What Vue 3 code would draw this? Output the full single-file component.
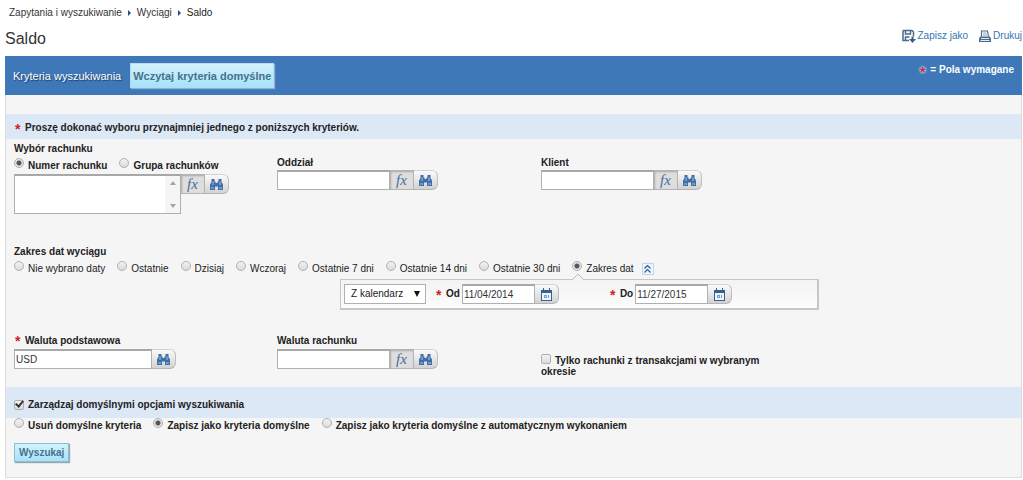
<script setup>
import { ref, h } from 'vue'

const accountMode = ref('number')
const range = ref('custom')
const calendar = ref('cal')
const from = ref('11/04/2014')
const to = ref('11/27/2015')
const currency = ref('USD')
const manage = ref(true)
const saveMode = ref('save')
const ranges = [
  { id: 'none', label: 'Nie wybrano daty' },
  { id: 'last', label: 'Ostatnie' },
  { id: 'today', label: 'Dzisiaj' },
  { id: 'yesterday', label: 'Wczoraj' },
  { id: 'd7', label: 'Ostatnie 7 dni' },
  { id: 'd14', label: 'Ostatnie 14 dni' },
  { id: 'd30', label: 'Ostatnie 30 dni' },
  { id: 'custom', label: 'Zakres dat' },
]
const saveModes = [
  { id: 'delete', label: 'Usuń domyślne kryteria' },
  { id: 'save', label: 'Zapisz jako kryteria domyślne' },
  { id: 'auto', label: 'Zapisz jako kryteria domyślne z automatycznym wykonaniem' },
]

const Binoculars = () =>
  h('svg', { width: 13, height: 11, viewBox: '0 0 13 11', 'aria-hidden': 'true' }, [
    h('path', {
      fill: '#3f6ea8',
      d: 'M1.500 0h3v2.500h1V4h2V2.500h1V0h3v3L13 5.500V11H8V7.500H5V11H0V5.500L1.500 3z',
    }),
    h('path', { fill: '#a9c4e2', d: 'M2.500 2.500h1V6h-1zM9.500 2.500h1V6h-1zM1 8.500h3v1H1zM9 8.500h3v1H9z' }),
  ])

const Calendar = () =>
  h('svg', { width: 11, height: 13, viewBox: '0 0 11 13', 'aria-hidden': 'true' }, [
    h('path', { fill: '#35628f', d: 'M2 0h1v2h5V0h1v2h2v11H0V2h2z' }),
    h('path', { fill: '#eef4fa', d: 'M1 5h9v7H1z' }),
    h('path', { fill: '#6d9ddb', d: 'M3 7h3v3H3zM7 7h1v3H7z' }),
    h('path', { fill: '#d4e5f8', d: 'M4 8h1v1H4z' }),
  ])

const Star = () => h('span', { class: 'star' }, '*')
</script>

<template>
  <div class="page">
    <nav class="crumbs" aria-label="Ścieżka">
      <a href="#">Zapytania i wyszukiwanie</a><i class="arrow"></i>
      <a href="#">Wyciągi</a><i class="arrow"></i>
      <span>Saldo</span>
    </nav>

    <header class="top">
      <h1>Saldo</h1>
      <div class="actions">
        <a href="#">
          <svg width="14" height="14" viewBox="0 0 14 14" aria-hidden="true">
            <path d="M1 1.500h9l1.500 1.500V7.500M7 11.500H1V1.500M3.500 1.500V5h5V1.500M3.500 11V8h4" fill="none" stroke="#4a6a8c" stroke-width="1.500" />
            <path d="M9.500 7.500h2V10H14l-3.500 4L7 10h2.500z" fill="#3d5f82" />
          </svg>
          Zapisz jako
        </a>
        <a href="#">
          <svg width="12" height="12" viewBox="0 0 12 12" aria-hidden="true">
            <path d="M2.500 6.500V1h6L9.500 6.500" fill="#fff" stroke="#4a6a8c" stroke-width="1.200" />
            <path d="M4 3h3.500M4 5h4" stroke="#8aa2ba" />
            <path d="M1 6.500h10l1 2V12H0V8.500z" fill="#4a6a8c" />
            <path d="M2 8.500h8M1.500 10.500h9" stroke="#dfe9f3" />
          </svg>
          Drukuj
        </a>
      </div>
    </header>

    <form class="card" @submit.prevent>
      <div class="bar">
        <h2>Kryteria wyszukiwania</h2>
        <button type="button" class="btn large">Wczytaj kryteria domyślne</button>
        <span class="required"><b class="glow">*</b>= Pola wymagane</span>
      </div>

      <p class="band"><Star />Proszę dokonać wyboru przynajmniej jednego z poniższych kryteriów.</p>

      <div class="columns accounts">
        <div>
          <label class="caption" for="account">Wybór rachunku</label>
          <div class="options strong modes">
            <label><input v-model="accountMode" type="radio" name="account-mode" value="number"><span>Numer rachunku</span></label>
            <label><input v-model="accountMode" type="radio" name="account-mode" value="group"><span>Grupa rachunków</span></label>
          </div>
          <div class="field">
            <div class="area">
              <textarea id="account"></textarea>
              <div class="scroll" aria-hidden="true">
                <svg width="6" height="4" viewBox="0 0 6 4"><path d="M0 4l3-4 3 4z" fill="#a3a3a3" /></svg>
                <svg width="6" height="4" viewBox="0 0 6 4"><path d="M0 0h6L3 4z" fill="#a3a3a3" /></svg>
              </div>
            </div>
            <button type="button" class="tool fx" aria-label="Funkcja">fx</button>
            <button type="button" class="tool end" aria-label="Szukaj"><Binoculars /></button>
          </div>
        </div>
        <div class="lower">
          <label class="caption" for="branch">Oddział</label>
          <div class="field">
            <input id="branch" type="text" class="mid">
            <button type="button" class="tool fx" aria-label="Funkcja">fx</button>
            <button type="button" class="tool end" aria-label="Szukaj"><Binoculars /></button>
          </div>
        </div>
        <div class="lower">
          <label class="caption" for="client">Klient</label>
          <div class="field">
            <input id="client" type="text" class="mid">
            <button type="button" class="tool fx" aria-label="Funkcja">fx</button>
            <button type="button" class="tool end" aria-label="Szukaj"><Binoculars /></button>
          </div>
        </div>
      </div>

      <div class="dates">
        <div class="caption">Zakres dat wyciągu</div>
        <div class="options">
          <label v-for="r in ranges" :key="r.id"><input v-model="range" type="radio" name="range" :value="r.id"><span>{{ r.label }}</span></label>
          <button type="button" class="collapse" aria-label="Zwiń">
            <svg width="7" height="8" viewBox="0 0 7 8" aria-hidden="true">
              <path d="M.5 3.500l3-3 3 3M.5 7.500l3-3 3 3" fill="none" stroke="#2d5c94" stroke-width="1.200" />
            </svg>
          </button>
        </div>
        <div class="panel">
          <svg class="notch" width="12" height="7" viewBox="0 0 12 7" aria-hidden="true">
            <path d="M0 7L6 1l6 6" fill="#f3f3f3" stroke="#bdbdbd" />
          </svg>
          <div class="picker">
            <select v-model="calendar" aria-label="Sposób wyboru daty">
              <option value="cal">Z kalendarz</option>
            </select>
            <svg class="caret" width="6" height="6" viewBox="0 0 6 6" aria-hidden="true"><path d="M0 0h6L3 6z" fill="#111" /></svg>
          </div>
          <div class="date">
            <label for="from"><Star />Od</label>
            <div class="field">
              <input id="from" v-model="from" type="text" class="short">
              <button type="button" class="tool end" aria-label="Kalendarz od"><Calendar /></button>
            </div>
          </div>
          <div class="date last">
            <label for="to"><Star />Do</label>
            <div class="field">
              <input id="to" v-model="to" type="text" class="short">
              <button type="button" class="tool end" aria-label="Kalendarz do"><Calendar /></button>
            </div>
          </div>
        </div>
      </div>

      <div class="columns currencies">
        <div>
          <label class="caption" for="base"><Star />Waluta podstawowa</label>
          <div class="field">
            <input id="base" v-model="currency" type="text" class="long">
            <button type="button" class="tool end" aria-label="Szukaj"><Binoculars /></button>
          </div>
        </div>
        <div>
          <label class="caption" for="acc-currency">Waluta rachunku</label>
          <div class="field">
            <input id="acc-currency" type="text" class="mid">
            <button type="button" class="tool fx" aria-label="Funkcja">fx</button>
            <button type="button" class="tool end" aria-label="Szukaj"><Binoculars /></button>
          </div>
        </div>
        <label class="only"><input type="checkbox">Tylko rachunki z transakcjami w wybranym okresie</label>
      </div>

      <div class="band manage">
        <label><input v-model="manage" type="checkbox"><span>Zarządzaj domyślnymi opcjami wyszukiwania</span></label>
      </div>
      <div class="options strong saves">
        <label v-for="s in saveModes" :key="s.id"><input v-model="saveMode" type="radio" name="save" :value="s.id"><span>{{ s.label }}</span></label>
      </div>
      <button type="submit" class="btn submit">Wyszukaj</button>
    </form>
  </div>
</template>

<style>
body {
  background: #fff;
}
</style>

<style scoped>
.page {
  box-sizing: border-box;
  padding: 7px 1px 2px 5px;
  font: 10px/12px "Liberation Sans", Arial, sans-serif;
  color: #222;
}
.page * {
  box-sizing: border-box;
}
h1, h2, p {
  margin: 0;
  font-weight: normal;
}
a {
  text-decoration: none;
}
.crumbs {
  display: flex;
  align-items: center;
  padding-left: 4px;
}
.crumbs a {
  color: #333;
}
.arrow {
  margin: 0 6px;
  border: 3px solid transparent;
  border-left-color: #1d4f8c;
  border-right: 0;
}
.top {
  display: flex;
  justify-content: space-between;
  height: 37px;
  padding-top: 10px;
}
h1 {
  font-size: 16px;
  line-height: 20px;
  color: #333;
}
.actions {
  display: flex;
  gap: 11px;
  height: 14px;
}
.actions a {
  display: flex;
  align-items: center;
  gap: 2px;
  color: #3574b0;
}
.card {
  border: solid #dcdcdc;
  border-width: 0 1px 1px;
  background: #f5f5f5;
  padding-bottom: 15px;
}
.bar {
  display: flex;
  align-items: center;
  height: 39px;
  margin: 0 -1px 19px;
  padding: 0 8px;
  background: #3e78b9;
  color: #fff;
}
h2 {
  margin-right: 9px;
  font-size: 11px;
  text-shadow: 1px 1px 1px #1c3c60;
}
.required {
  display: flex;
  gap: 5px;
  margin-left: auto;
  margin-bottom: 12px;
  font-weight: bold;
}
.glow {
  height: 12px;
  padding-top: 2px;
  font-size: 14px;
  color: #c8203c;
  text-shadow: 0 0 2px #fff, 0 0 3px #fff;
}
.btn {
  height: 19px;
  padding: 0 4px;
  border: 1px solid #8bbcd2;
  background: linear-gradient(#d3f1fc, #a6e3fa);
  box-shadow: 1px 1px 1px #9aa7ae;
  color: #47718c;
  font: bold 10px/16px "Liberation Sans", Arial, sans-serif;
  white-space: nowrap;
}
.btn.large {
  height: 25px;
  padding: 0 2px;
  font-size: 11px;
  border-color: #b8dced;
  box-shadow: 1px 1px 1px #8bb1d8;
}
.band {
  padding: 8px 8px 5px;
  background: #dce8f6;
  font-weight: bold;
}
.star {
  display: inline-block;
  width: 11px;
  height: 12px;
  padding-left: 1px;
  vertical-align: top;
  color: #d01f1f;
  font-size: 14px;
  font-weight: bold;
  line-height: 14px;
}
.columns {
  display: grid;
  grid-template-columns: 263px 264px 1fr;
  padding: 0 8px;
}
.caption {
  display: block;
  font-weight: bold;
  line-height: 14px;
}
.accounts {
  padding-top: 3px;
}
.lower {
  padding-top: 14px;
}
.currencies .field {
  padding-top: 1px;
}
.options {
  display: flex;
  gap: 12px;
}
.options label {
  display: flex;
  gap: 4px;
  height: 16px;
}
.options span {
  padding-top: 4px;
  white-space: nowrap;
}
.modes {
  padding-bottom: 2px;
}
.strong {
  font-weight: bold;
}
input[type="radio"], input[type="checkbox"] {
  flex: none;
  appearance: none;
  width: 10px;
  height: 10px;
  margin: 0;
  border: 1px solid #b0b0b0;
  border-radius: 2px;
  background: linear-gradient(#f2f2f2, #dcdcdc);
}
input[type="radio"] {
  margin-top: 2px;
  border-radius: 50%;
}
input[type="radio"]:checked {
  background: radial-gradient(circle, #555 2px, #e4e4e4 3px);
}
.field {
  display: flex;
  align-items: flex-start;
}
input[type="text"], textarea {
  height: 20px;
  margin: 0;
  padding: 0 1px;
  border: 1px solid #b0b0b0;
  border-top: 2px solid #a8a8a8;
  border-radius: 0;
  outline: 0;
  background: #fff;
  color: #333;
  font: 10px/14px "Liberation Sans", Arial, sans-serif;
}
.area {
  position: relative;
}
textarea {
  display: block;
  width: 167px;
  height: 40px;
  resize: none;
}
.scroll {
  position: absolute;
  inset: 2px 1px 1px auto;
  display: flex;
  flex-direction: column;
  align-items: center;
  justify-content: space-between;
  width: 15px;
  padding: 5px 0;
  background: #f5f5f5;
}
.mid {
  width: 113px;
}
.long {
  width: 138px;
}
.short {
  width: 73px;
}
.tool {
  display: flex;
  align-items: center;
  justify-content: center;
  width: 24px;
  height: 20px;
  padding: 0;
  border: 1px solid #c4c4c4;
  border-left: 0;
  background: linear-gradient(#fafafa, #d2d2d2);
}
.tool.end {
  border-color: #d2d2d2 #bebebe #b4b4b4;
  border-radius: 0 6px 6px 0;
}
.tool.fx {
  background: #dedede;
  box-shadow: inset 1px 1px 2px #aaa;
  border-color: #b4b4b4;
  color: #436f9b;
  font: italic 15px/16px "Liberation Serif", "Times New Roman", serif;
}
.dates {
  padding: 31px 8px 0;
}
.collapse {
  display: flex;
  align-items: center;
  justify-content: center;
  width: 12px;
  height: 12px;
  margin: 4px 0 0 -4px;
  padding: 0;
  border: 1px solid #bcd6ee;
  background: #eef6fd;
}
.panel {
  position: relative;
  display: flex;
  align-items: center;
  width: 479px;
  height: 31px;
  margin: 4px 0 0 326px;
  padding: 0 3px;
  border: 2px solid #c6c6c6;
  border-width: 1px 2px 2px 1px;
  background: linear-gradient(#f3f3f3, #fcfcfc);
}
.notch {
  position: absolute;
  top: -7px;
  left: 231px;
}
.picker {
  position: relative;
}
select {
  display: block;
  appearance: none;
  width: 82px;
  height: 20px;
  padding: 0 6px;
  border: 1px solid #b0b0b0;
  border-radius: 0;
  background: #fff;
  color: #222;
  font: 10px/16px "Liberation Sans", Arial, sans-serif;
}
.caret {
  position: absolute;
  top: 7px;
  right: 6px;
  pointer-events: none;
}
.date {
  display: flex;
  align-items: center;
  gap: 2px;
  margin-left: 9px;
  font-weight: bold;
}
.date.last {
  margin-left: 50px;
}
.currencies {
  padding-top: 24px;
}
.only {
  width: 240px;
  padding-top: 20px;
  font-weight: bold;
  line-height: 11px;
}
.only input[type="checkbox"] {
  margin-right: 4px;
}
input[type="checkbox"]:checked {
  position: relative;
}
input[type="checkbox"]:checked::after {
  content: "";
  position: absolute;
  left: 3px;
  top: 0;
  width: 3px;
  height: 6px;
  border: solid #333;
  border-width: 0 2px 2px 0;
  box-sizing: content-box;
  transform: translate(-1px, -2px) rotate(40deg);
}
.manage {
  margin-top: 10px;
  padding: 12px 8px 7px;
}
.manage label {
  display: flex;
  align-items: center;
  gap: 4px;
}
.saves {
  margin-top: -2px;
  padding: 0 8px;
}
.submit {
  display: block;
  margin: 11px 0 0 8px;
}
</style>
